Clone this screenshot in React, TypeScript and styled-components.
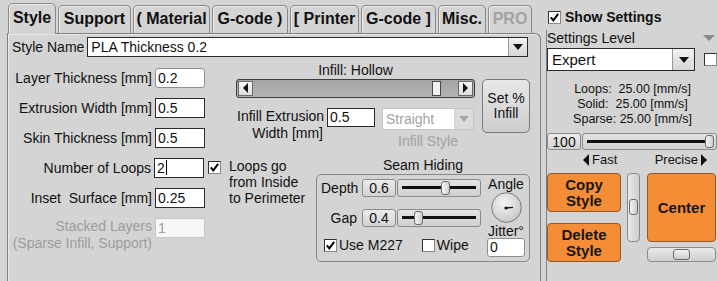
import React from "react";
import styled, { createGlobalStyle } from "styled-components";

const GlobalStyle = createGlobalStyle`
  html, body {
    margin: 0;
    padding: 0;
    background: #d4d4d4;
    overflow: hidden;
  }
  body {
    font-family: "Liberation Sans", Arial, sans-serif;
    font-size: 14px;
    line-height: 16px;
    color: #111;
  }
`;

const tabs = [
  { label: "Style", w: 48, active: true },
  { label: "Support", w: 73 },
  { label: "( Material", w: 77 },
  { label: "G-code )", w: 76 },
  { label: "[ Printer", w: 69 },
  { label: "G-code ]", w: 75 },
  { label: "Misc.", w: 48 },
  { label: "PRO", w: 44, muted: true },
];

const formRows = [
  { label: "Layer Thickness [mm]", value: "0.2", soft: true },
  { label: "Extrusion Width [mm]", value: "0.5" },
  { label: "Skin Thickness [mm]", value: "0.5" },
];

export default function App() {
  return (
    <>
      <GlobalStyle />
      <Page>
        <LeftColumn>
          <TabRow>
            {tabs.map((t) => (
              <Tab key={t.label} $w={t.w} $active={t.active} $muted={t.muted}>
                {t.label}
              </Tab>
            ))}
          </TabRow>
          <Panel>
            <NameRow>
              <span>Style Name</span>
              <Select $grow>
                <SelectText>PLA Thickness 0.2</SelectText>
                <SelectArrow>
                  <DownTriangle />
                </SelectArrow>
              </Select>
            </NameRow>
            <Body>
              <LeftForm>
                {formRows.map((r) => (
                  <FormRow key={r.label}>
                    <FieldLabel>{r.label}</FieldLabel>
                    <Field $soft={r.soft}>{r.value}</Field>
                  </FormRow>
                ))}
                <FormRow>
                  <FieldLabel>Number of Loops</FieldLabel>
                  <Field>
                    2<Caret />
                  </Field>
                  <CheckSlot>
                    <Check checked />
                  </CheckSlot>
                </FormRow>
                <FormRow>
                  <FieldLabel>Inset&nbsp; Surface [mm]</FieldLabel>
                  <Field>0.25</Field>
                </FormRow>
                <FormRow $top>
                  <FieldLabel $muted $tall>
                    Stacked Layers
                    <br />
                    (Sparse Infill, Support)
                  </FieldLabel>
                  <Field $disabled>1</Field>
                </FormRow>
              </LeftForm>

              <RightArea>
                <InfillBlock>
                  <InfillMain>
                    <CenterLabel>Infill: Hollow</CenterLabel>
                    <ScrollTrack>
                      <ScrollButton>
                        <LeftTriangle />
                      </ScrollButton>
                      <ScrollThumb />
                      <ScrollButton>
                        <RightTriangle />
                      </ScrollButton>
                    </ScrollTrack>
                    <ExtrRow>
                      <ExtrLabel>
                        Infill Extrusion
                        <br />
                        Width [mm]
                      </ExtrLabel>
                      <Field $w={48} $h={19}>0.5</Field>
                      <StyleCol>
                        <Select $disabled $h={22}>
                          <SelectText>Straight</SelectText>
                          <SelectArrow $disabled>
                            <DownTriangle $muted />
                          </SelectArrow>
                        </Select>
                        <MutedCaption>Infill Style</MutedCaption>
                      </StyleCol>
                    </ExtrRow>
                  </InfillMain>
                  <SetButton>
                    Set %
                    <br />
                    Infill
                  </SetButton>
                </InfillBlock>

                <LowerRow>
                  <Note>
                    Loops go
                    <br />
                    from Inside
                    <br />
                    to Perimeter
                  </Note>
                  <SeamCol>
                    <SeamTitle>Seam Hiding</SeamTitle>
                    <SeamBox>
                      <SeamLeft>
                        <SeamRow>
                          <SeamLabel>Depth</SeamLabel>
                          <ValueBox $w={34}>0.6</ValueBox>
                          <Slider $w={84} $at={43} />
                        </SeamRow>
                        <SeamRow>
                          <SeamLabel>Gap</SeamLabel>
                          <ValueBox $w={34}>0.4</ValueBox>
                          <Slider $w={84} $at={16} />
                        </SeamRow>
                        <OptionRow>
                          <Check checked />
                          <OptionText>Use M227</OptionText>
                          <OptionGap />
                          <Check />
                          <OptionText>Wipe</OptionText>
                        </OptionRow>
                      </SeamLeft>
                      <SeamRight>
                        <span>Angle</span>
                        <Dial />
                        <span>Jitter°</span>
                        <Field $w={38} $h={19} $soft>0</Field>
                      </SeamRight>
                    </SeamBox>
                  </SeamCol>
                </LowerRow>
              </RightArea>
            </Body>
          </Panel>
        </LeftColumn>

        <SideColumn>
          <SideHeader>
            <Check checked />
            <HeaderText>Show Settings</HeaderText>
          </SideHeader>
          <SideBody>
            <LevelRow>
              <span>Settings Level</span>
              <GrayTriangle />
            </LevelRow>
            <LevelSelectRow>
              <Select $w={148} $h={23}>
                <SelectText $big>Expert</SelectText>
                <SelectArrow $w={21}>
                  <DownTriangle />
                </SelectArrow>
              </Select>
              <Check />
            </LevelSelectRow>
            <Speeds>
              {"Loops:  25.00 [mm/s]"}
              <br />
              {"Solid:  25.00 [mm/s]"}
              <br />
              {"Sparse: 25.00 [mm/s]"}
            </Speeds>
            <SpeedRow>
              <ValueBox $w={34} $h={17}>100</ValueBox>
              <Slider $w={135} $h={17} $at={122} />
            </SpeedRow>
            <FastRow>
              <FastSide>
                <LeftTriangle $size={6} />
                Fast
              </FastSide>
              <FastSide>
                Precise
                <RightTriangle $size={6} />
              </FastSide>
            </FastRow>
            <ButtonGrid>
              <ButtonStack>
                <OrangeButton $h={39}>
                  Copy
                  <br />
                  Style
                </OrangeButton>
                <OrangeButton $h={39}>
                  Delete
                  <br />
                  Style
                </OrangeButton>
              </ButtonStack>
              <VSlider>
                <VThumb />
              </VSlider>
              <CenterStack>
                <OrangeButton $h={69}>Center</OrangeButton>
                <HSlider>
                  <HThumb />
                </HSlider>
              </CenterStack>
            </ButtonGrid>
          </SideBody>
        </SideColumn>
      </Page>
    </>
  );
}

function Check({ checked }: { checked?: boolean }) {
  return (
    <CheckBox>
      {checked && (
        <svg width="11" height="11" viewBox="0 0 11 11">
          <path d="M1.8 5.4 L4.3 8.4 L9.2 1.8" fill="none" stroke="#000" strokeWidth="2" />
        </svg>
      )}
    </CheckBox>
  );
}

function Dial() {
  return (
    <DialWrap>
      <svg width="31" height="31" viewBox="0 0 31 31">
        <defs>
          <radialGradient id="dialFill" cx="40%" cy="35%" r="75%">
            <stop offset="0" stopColor="#f3f3f3" />
            <stop offset="1" stopColor="#c4c4c4" />
          </radialGradient>
        </defs>
        <circle cx="15.5" cy="15.5" r="14.8" fill="url(#dialFill)" stroke="#7a7a7a" />
        <line x1="15" y1="16" x2="22" y2="15.4" stroke="#111" strokeWidth="1.3" />
        <circle cx="15" cy="16" r="1.6" fill="#111" />
      </svg>
    </DialWrap>
  );
}

const Page = styled.div`
  display: flex;
  width: 718px;
  height: 281px;
`;

const LeftColumn = styled.div`
  display: flex;
  flex-direction: column;
  width: 534px;
  margin-left: 7px;
  flex-shrink: 0;
`;

const TabRow = styled.div`
  display: flex;
  align-items: flex-end;
  gap: 2px;
  height: 33px;
  padding-left: 1px;
`;

const Tab = styled.div<{ $w: number; $active?: boolean; $muted?: boolean }>`
  box-sizing: border-box;
  position: relative;
  z-index: ${(p) => (p.$active ? 1 : 0)};
  width: ${(p) => p.$w}px;
  height: ${(p) => (p.$active ? 31 : 28)}px;
  margin-bottom: ${(p) => (p.$active ? -1 : 0)}px;
  padding-bottom: ${(p) => (p.$active ? 2 : 0)}px;
  display: flex;
  align-items: center;
  justify-content: center;
  border: 1px solid #8a8a8a;
  border-bottom: none;
  border-radius: 5px 5px 0 0;
  box-shadow: inset 1px 1px 0 #ececec;
  background: #d4d4d4;
  font-size: 16px;
  font-weight: bold;
  white-space: nowrap;
  color: ${(p) => (p.$muted ? "#a2a2a2" : "#111")};
`;

const Panel = styled.div`
  box-sizing: border-box;
  height: 250px;
  border: 1px solid #808080;
  border-bottom: none;
  border-top-right-radius: 6px;
  box-shadow: inset 1px 1px 0 #e8e8e8;
  padding: 3px 10px 0 4px;
`;

const NameRow = styled.div`
  display: flex;
  align-items: center;
  gap: 3px;
  height: 20px;
  padding-right: 2px;
`;

const Select = styled.div<{ $grow?: boolean; $w?: number; $h?: number; $disabled?: boolean }>`
  box-sizing: border-box;
  display: flex;
  align-items: stretch;
  ${(p) => (p.$grow ? "flex: 1;" : `width: ${p.$w ?? 92}px;`)}
  height: ${(p) => p.$h ?? 20}px;
  background: #fff;
  border: 1px solid ${(p) => (p.$disabled ? "#c4c4c4" : "#2a2a2a")};
  color: ${(p) => (p.$disabled ? "#a4a4a4" : "#111")};
`;

const SelectText = styled.div<{ $big?: boolean }>`
  flex: 1;
  display: flex;
  align-items: center;
  padding-left: ${(p) => (p.$big ? 4 : 3)}px;
  font-size: ${(p) => (p.$big ? 15 : 14)}px;
  white-space: nowrap;
`;

const SelectArrow = styled.div<{ $w?: number; $disabled?: boolean }>`
  width: ${(p) => p.$w ?? 18}px;
  display: flex;
  align-items: center;
  justify-content: center;
  background: ${(p) => (p.$disabled ? "#dcdcdc" : "linear-gradient(#f2f2f2, #d6d6d6)")};
  border-left: 1px solid ${(p) => (p.$disabled ? "#d0d0d0" : "#9a9a9a")};
`;

const DownTriangle = styled.span<{ $muted?: boolean }>`
  width: 0;
  height: 0;
  border-left: 5px solid transparent;
  border-right: 5px solid transparent;
  border-top: 6px solid ${(p) => (p.$muted ? "#a8a8a8" : "#111")};
`;

const LeftTriangle = styled.span<{ $size?: number }>`
  width: 0;
  height: 0;
  border-top: ${(p) => p.$size ?? 5}px solid transparent;
  border-bottom: ${(p) => p.$size ?? 5}px solid transparent;
  border-right: ${(p) => p.$size ?? 5}px solid #111;
`;

const RightTriangle = styled.span<{ $size?: number }>`
  width: 0;
  height: 0;
  border-top: ${(p) => p.$size ?? 5}px solid transparent;
  border-bottom: ${(p) => p.$size ?? 5}px solid transparent;
  border-left: ${(p) => p.$size ?? 5}px solid #111;
`;

const GrayTriangle = styled.span`
  width: 0;
  height: 0;
  border-left: 6px solid transparent;
  border-right: 6px solid transparent;
  border-top: 6px solid #8a8a8a;
`;

const Body = styled.div`
  display: flex;
  align-items: flex-start;
  margin-top: 5px;
`;

const LeftForm = styled.div`
  display: flex;
  flex-direction: column;
  gap: 10px;
  width: 209px;
  padding-top: 6px;
  flex-shrink: 0;
`;

const FormRow = styled.div<{ $top?: boolean }>`
  display: flex;
  align-items: ${(p) => (p.$top ? "flex-start" : "center")};
  height: 20px;
`;

const FieldLabel = styled.div<{ $muted?: boolean; $tall?: boolean }>`
  width: 140px;
  margin-right: 3px;
  text-align: right;
  white-space: nowrap;
  line-height: ${(p) => (p.$tall ? 17 : 16)}px;
  color: ${(p) => (p.$muted ? "#9c9c9c" : "#111")};
`;

const Field = styled.div<{ $soft?: boolean; $disabled?: boolean; $w?: number; $h?: number }>`
  box-sizing: border-box;
  width: ${(p) => p.$w ?? 50}px;
  height: ${(p) => p.$h ?? 20}px;
  flex-shrink: 0;
  display: flex;
  align-items: center;
  padding-left: 2px;
  background: ${(p) => (p.$disabled ? "#f7f7f7" : "#fff")};
  border: 1px solid ${(p) => (p.$disabled ? "#c6c6c6" : p.$soft ? "#8e8e8e" : "#2a2a2a")};
  border-radius: ${(p) => (p.$soft ? 3 : 0)}px;
  color: ${(p) => (p.$disabled ? "#a0a0a0" : "#111")};
`;

const Caret = styled.span`
  width: 1px;
  height: 15px;
  margin-left: 1px;
  background: #000;
`;

const CheckSlot = styled.div`
  margin-left: 4px;
  display: flex;
`;

const CheckBox = styled.span`
  box-sizing: border-box;
  width: 13px;
  height: 13px;
  flex-shrink: 0;
  display: flex;
  align-items: center;
  justify-content: center;
  background: #fff;
  border: 1px solid #333;
  border-right-color: #888;
  border-bottom-color: #888;
`;

const RightArea = styled.div`
  display: flex;
  flex-direction: column;
  width: 301px;
  margin-left: 8px;
`;

const InfillBlock = styled.div`
  display: flex;
  gap: 7px;
  margin-left: 7px;
`;

const InfillMain = styled.div`
  display: flex;
  flex-direction: column;
  width: 239px;
`;

const CenterLabel = styled.div`
  text-align: center;
  line-height: 17px;
`;

const ScrollTrack = styled.div`
  box-sizing: border-box;
  position: relative;
  display: flex;
  justify-content: space-between;
  align-items: stretch;
  height: 19px;
  padding: 1px;
  border: 1px solid #3c3c3c;
  border-radius: 3px;
  background: linear-gradient(#a4a4a4, #b4b4b4);
`;

const ScrollButton = styled.div`
  box-sizing: border-box;
  width: 15px;
  display: flex;
  align-items: center;
  justify-content: center;
  background: linear-gradient(#f4f4f4, #dedede);
  border: 1px solid #6a6a6a;
`;

const ScrollThumb = styled.div`
  position: absolute;
  top: 1px;
  bottom: 1px;
  left: 195px;
  width: 9px;
  box-sizing: border-box;
  background: #f0f0f0;
  border: 1px solid #4a4a4a;
`;

const ExtrRow = styled.div`
  display: flex;
  align-items: flex-start;
  margin-top: 10px;
`;

const ExtrLabel = styled.div`
  width: 86px;
  margin: 0 4px 0 1px;
  text-align: right;
  line-height: 17px;
  white-space: nowrap;
`;

const StyleCol = styled.div`
  display: flex;
  flex-direction: column;
  align-items: center;
  margin-left: 7px;
`;

const MutedCaption = styled.div`
  margin-top: 3px;
  color: #a0a0a0;
`;

const SetButton = styled.div`
  box-sizing: border-box;
  width: 48px;
  height: 54px;
  margin-top: 17px;
  display: flex;
  align-items: center;
  justify-content: center;
  text-align: center;
  line-height: 15px;
  border: 1px solid #7a7a7a;
  border-radius: 5px;
  background: linear-gradient(#e8e8e8, #cdcdcd);
`;

const LowerRow = styled.div`
  display: flex;
  margin-top: 8px;
`;

const Note = styled.div`
  width: 87px;
  margin-top: 1px;
  white-space: nowrap;
`;

const SeamCol = styled.div`
  display: flex;
  flex-direction: column;
  width: 214px;
`;

const SeamTitle = styled.div`
  text-align: center;
  line-height: 17px;
`;

const SeamBox = styled.div`
  box-sizing: border-box;
  display: flex;
  height: 88px;
  padding: 4px 3px 0 4px;
  border: 1px solid #888;
  border-radius: 5px;
`;

const SeamLeft = styled.div`
  display: flex;
  flex-direction: column;
  gap: 12px;
`;

const SeamRow = styled.div`
  display: flex;
  align-items: center;
  height: 18px;
`;

const SeamLabel = styled.div`
  width: 36px;
  margin-right: 5px;
  text-align: right;
`;

const ValueBox = styled.div<{ $w: number; $h?: number }>`
  box-sizing: border-box;
  width: ${(p) => p.$w}px;
  height: ${(p) => p.$h ?? 18}px;
  flex-shrink: 0;
  display: flex;
  align-items: center;
  justify-content: center;
  border: 1px solid #8a8a8a;
  border-radius: 3px;
  background: linear-gradient(#ececec, #d2d2d2);
`;

const Slider = styled.div<{ $w: number; $h?: number; $at: number }>`
  box-sizing: border-box;
  position: relative;
  width: ${(p) => p.$w}px;
  height: ${(p) => p.$h ?? 18}px;
  margin-left: 1px;
  flex-shrink: 0;
  border: 1px solid #8a8a8a;
  border-radius: 3px;
  background: linear-gradient(#e4e4e4, #d0d0d0);

  &::before {
    content: "";
    position: absolute;
    left: 4px;
    right: 4px;
    top: 50%;
    height: 3px;
    margin-top: -1.5px;
    background: #111;
  }

  &::after {
    content: "";
    position: absolute;
    top: 1px;
    bottom: 1px;
    left: ${(p) => p.$at}px;
    width: 9px;
    box-sizing: border-box;
    border: 1px solid #6a6a6a;
    border-radius: 3px;
    background: linear-gradient(90deg, #f6f6f6, #d0d0d0);
  }
`;

const OptionRow = styled.div`
  display: flex;
  align-items: center;
  height: 13px;
  padding-left: 3px;
`;

const OptionText = styled.span`
  margin-left: 2px;
`;

const OptionGap = styled.span`
  width: 19px;
`;

const SeamRight = styled.div`
  display: flex;
  flex-direction: column;
  align-items: center;
  width: 40px;
  margin-left: auto;
  margin-top: -3px;

  & > span:last-of-type {
    margin-bottom: -1px;
  }
`;

const DialWrap = styled.div`
  display: flex;
  height: 31px;
`;

const SideColumn = styled.div`
  display: flex;
  flex-direction: column;
  width: 172px;
  margin-left: 5px;
  flex-shrink: 0;
`;

const SideHeader = styled.div`
  display: flex;
  align-items: center;
  height: 26px;
  padding: 4px 0 0 2px;
`;

const HeaderText = styled.span`
  margin-left: 4px;
  font-weight: bold;
  font-size: 14px;
`;

const SideBody = styled.div`
  flex: 1;
  display: flex;
  flex-direction: column;
  border-left: 1px solid #808080;
`;

const LevelRow = styled.div`
  display: flex;
  align-items: center;
  justify-content: space-between;
  height: 16px;
  padding-right: 3px;
`;

const LevelSelectRow = styled.div`
  display: flex;
  align-items: center;
  gap: 9px;
  margin-top: 2px;
`;

const Speeds = styled.div`
  margin-top: 11px;
  text-align: center;
  font-size: 12.5px;
  line-height: 15px;
  white-space: pre;
`;

const SpeedRow = styled.div`
  display: flex;
  margin-top: 6px;
`;

const FastRow = styled.div`
  display: flex;
  justify-content: space-between;
  align-items: center;
  height: 15px;
  margin-top: 2px;
  padding: 0 11px 0 36px;
  font-size: 13px;
`;

const FastSide = styled.span`
  display: flex;
  align-items: center;
  gap: 3px;
`;

const ButtonGrid = styled.div`
  display: flex;
  align-items: flex-start;
  margin-top: 6px;
`;

const ButtonStack = styled.div`
  display: flex;
  flex-direction: column;
  gap: 11px;
  width: 74px;
`;

const CenterStack = styled.div`
  display: flex;
  flex-direction: column;
  gap: 5px;
  width: 69px;
`;

const OrangeButton = styled.div<{ $h: number }>`
  box-sizing: border-box;
  height: ${(p) => p.$h}px;
  display: flex;
  align-items: center;
  justify-content: center;
  text-align: center;
  font-size: 15px;
  font-weight: bold;
  line-height: 16px;
  color: #161616;
  background: #f48d36;
  border: 1px solid #8c5a2c;
  border-radius: 4px;
`;

const VSlider = styled.div`
  box-sizing: border-box;
  position: relative;
  width: 13px;
  height: 69px;
  margin: 0 7px 0 6px;
  border: 1px solid #8a8a8a;
  border-radius: 4px;
  background: linear-gradient(90deg, #e8e8e8, #cfcfcf);
`;

const VThumb = styled.div`
  position: absolute;
  left: 1px;
  right: 1px;
  top: 25px;
  height: 16px;
  box-sizing: border-box;
  border: 1px solid #6a6a6a;
  border-radius: 3px;
  background: linear-gradient(90deg, #f4f4f4, #cccccc);
`;

const HSlider = styled.div`
  box-sizing: border-box;
  position: relative;
  height: 15px;
  border: 1px solid #8a8a8a;
  border-radius: 4px;
  background: linear-gradient(#e8e8e8, #cfcfcf);
`;

const HThumb = styled.div`
  position: absolute;
  top: 1px;
  bottom: 1px;
  left: 25px;
  width: 17px;
  box-sizing: border-box;
  border: 1px solid #6a6a6a;
  border-radius: 3px;
  background: linear-gradient(#f4f4f4, #cccccc);
`;
